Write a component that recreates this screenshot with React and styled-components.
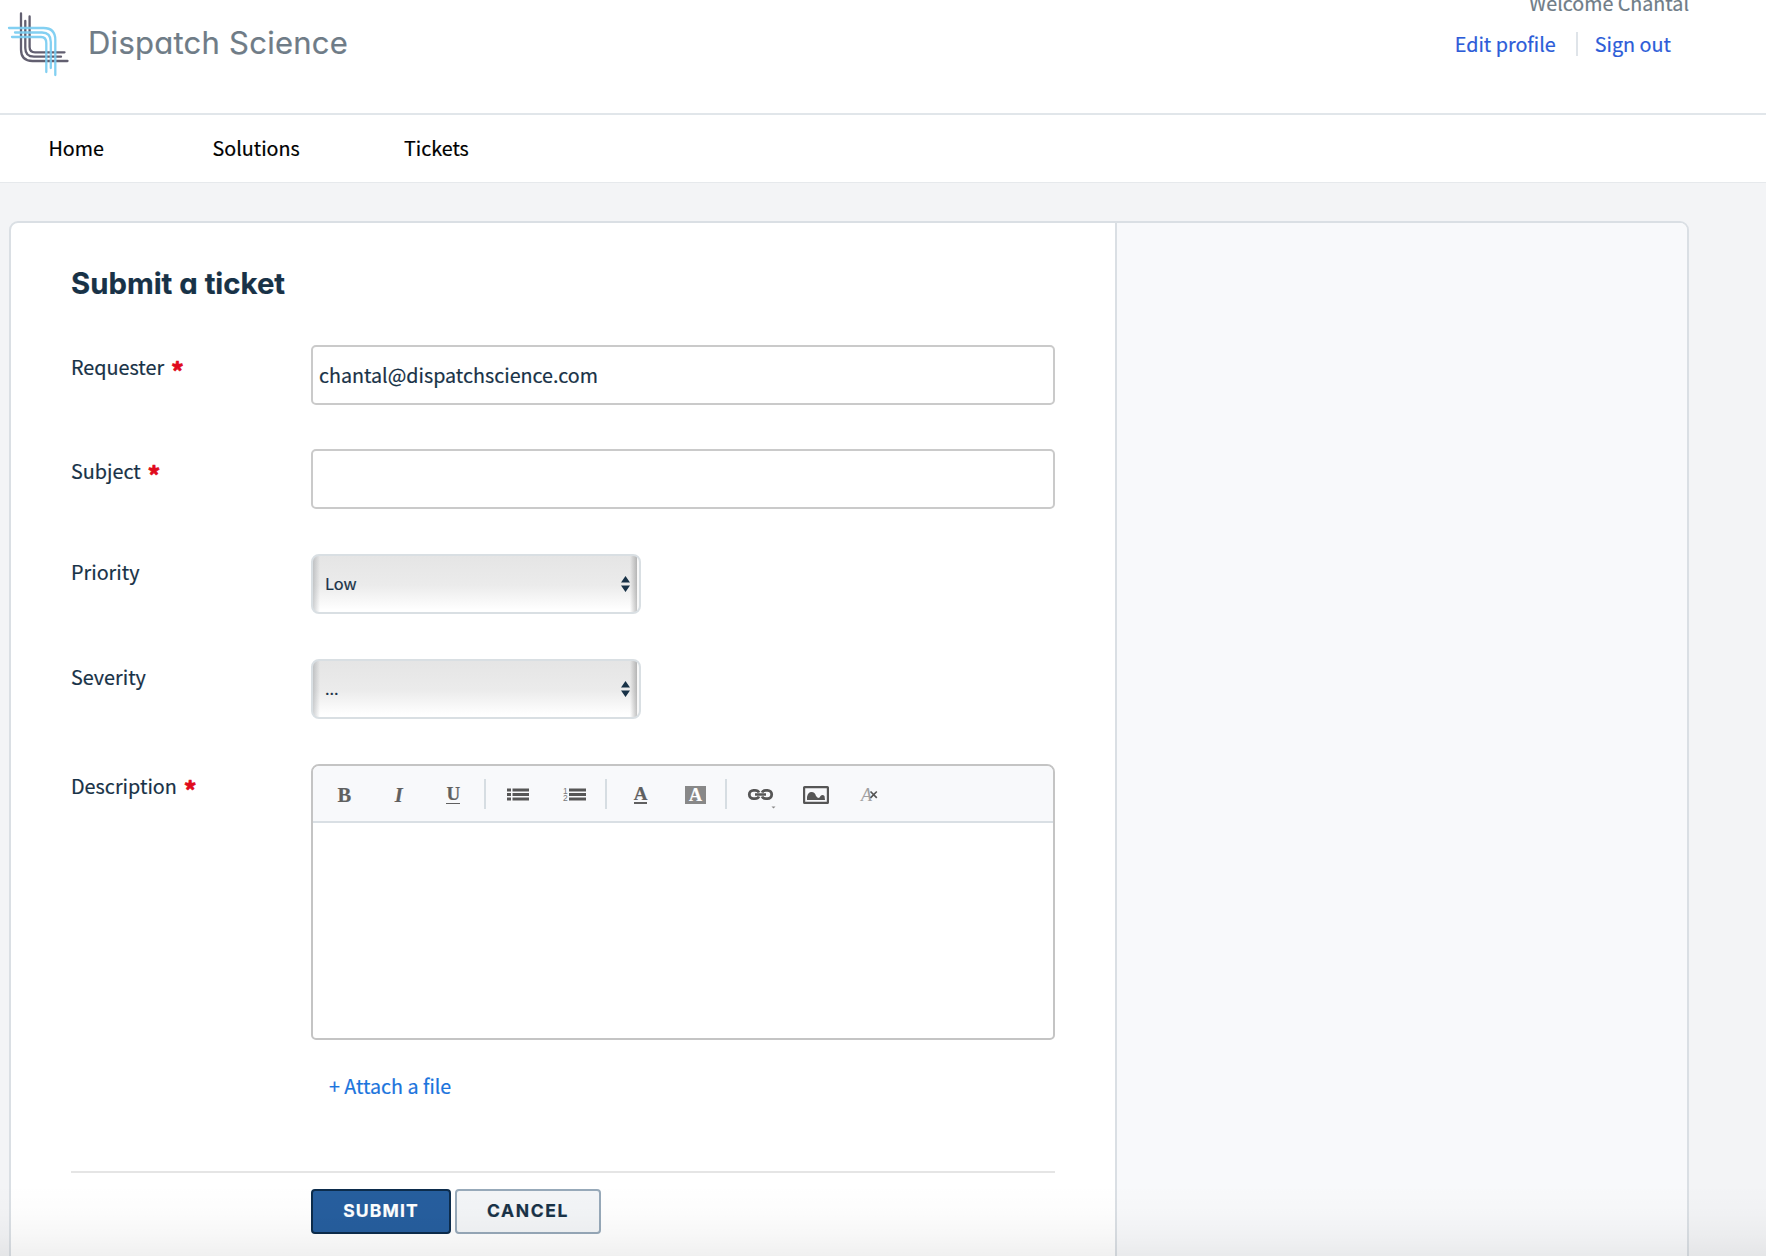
import React from "react";
import styled, { createGlobalStyle, css } from "styled-components";

const sans = '"Noto Sans CJK SC", "Noto Sans", sans-serif';
const display = 'Inter, "Open Sans", sans-serif';

const GlobalStyle = createGlobalStyle`
  *, *::before, *::after { box-sizing: border-box; }
  html, body { margin: 0; padding: 0; }
  body {
    background: #f3f4f6;
    color: #183247;
    font-family: ${sans};
    font-size: 20px;
    -webkit-text-stroke: 0.2px;
    overflow: hidden;
  }
`;

const Page = styled.div`
  position: relative;
  display: flex;
  flex-direction: column;
  height: 1256px;
  overflow: hidden;
`;

const Header = styled.header`
  display: flex;
  flex: none;
  justify-content: space-between;
  align-items: flex-start;
  height: 115px;
  padding-right: 77px;
  background: #fff;
  border-bottom: 2px solid #e1e6ea;
`;

const Brand = styled.div`
  display: flex;
  align-items: center;
  height: 86px;
`;

const BrandMark = styled.svg`
  width: 88px;
  height: 86px;
  fill: none;
  stroke-width: 2.3;
  stroke-linecap: round;
`;

const BrandName = styled.span`
  font-family: ${display};
  font-size: 31px;
  line-height: 40px;
  letter-spacing: 0.25px;
  font-feature-settings: "cv11";
  color: #6f7c87;
`;

const Account = styled.div`
  display: flex;
  flex-direction: column;
  align-items: flex-end;
  margin-top: -9px;
`;

const Welcome = styled.span`
  font-size: 19.7px;
  line-height: 24px;
  color: #6f7c87;
`;

const AccountLinks = styled.div`
  display: flex;
  align-items: center;
  margin: 17px 18px 0 0;
`;

const AccountLink = styled.a`
  font-size: 19.75px;
  line-height: 24px;
  color: #2c5cd8;
  & + & {
    margin-left: 20px;
    padding-left: 17px;
    border-left: 2px solid #dfe4e9;
  }
`;

const Nav = styled.nav`
  display: flex;
  flex: none;
  align-items: center;
  height: 68px;
  padding: 0 0 2px 48.5px;
  background: #fff;
  border-bottom: 1px solid #e6e9ec;
`;

const NavLink = styled.a`
  width: ${(p) => p.$width}px;
  font-size: 19.7px;
  line-height: 30px;
  color: #000;
`;

const Card = styled.main`
  display: flex;
  flex: none;
  width: 1680px;
  height: 1080px;
  margin: 38px 0 0 9px;
  background: #fff;
  border: 2px solid #dadfe4;
  border-radius: 9px;
  overflow: hidden;
`;

const Form = styled.form`
  width: 1104px;
  padding: 44px 60px 0;
`;

const Sidebar = styled.aside`
  flex: 1;
  background: #f8f9fb;
  border-left: 2px solid #dadfe4;
`;

const Title = styled.h1`
  margin: 0 0 44px;
  font-family: ${display};
  font-size: 29.3px;
  font-weight: 650;
  line-height: 34px;
  letter-spacing: 0;
  font-feature-settings: "cv11";
`;

const Row = styled.div`
  display: grid;
  grid-template-columns: 240px 744px;
  align-items: start;
  margin-bottom: ${(p) => p.$gap ?? 45}px;
`;

const Label = styled.label`
  display: flex;
  padding-top: ${(p) => (p.$raised ? 3 : 7)}px;
  font-size: 19.8px;
  line-height: 30px;
`;

const Required = styled.span`
  height: 30px;
  margin-left: 7px;
  padding-top: 3px;
  font-size: 23.5px;
  font-weight: 900;
  line-height: 30px;
  color: #e00b1c;
  -webkit-text-stroke: 0.6px;
`;

const TextInput = styled.input`
  width: 100%;
  height: 60px;
  padding: 0 6px 1px;
  font-family: ${sans};
  font-size: 19.7px;
  color: #183247;
  background: #fff;
  border: 2px solid #cacaca;
  border-radius: 5px;
  outline: none;
`;

const SelectBox = styled.div`
  display: flex;
  justify-content: space-between;
  align-items: center;
  width: 330px;
  height: 60px;
  padding: 0 9.5px 0 12px;
  background: linear-gradient(
      90deg,
      rgba(120, 125, 130, 0.35),
      transparent 7px,
      transparent calc(100% - 9px),
      rgba(110, 110, 110, 0.42) calc(100% - 2px),
      #f8f8f8 calc(100% - 2px)
    ),
    linear-gradient(#e5e5e5 0%, #ebebeb 52%, #fff 96%);
  border: 2px solid #d9dfe3;
  border-radius: 8px;
`;

const SelectValue = styled.span`
  padding-bottom: 2px;
  font-size: 16.3px;
  line-height: 24px;
`;

const Arrows = styled.svg`
  width: 9px;
  height: 16px;
  fill: #183247;
`;

const Editor = styled.div`
  height: 276px;
  background: #fff;
  border: 2px solid #c4c4c4;
  border-radius: 8px 8px 5px 5px;
  overflow: hidden;
`;

const Toolbar = styled.div`
  display: flex;
  align-items: center;
  height: 57px;
  padding-left: 4px;
  background: #f8f9fb;
  border-bottom: 2px solid #d9dfe4;
`;

const Tool = styled.span`
  display: flex;
  flex: none;
  justify-content: center;
  align-items: center;
  width: ${(p) => p.$width ?? 54.5}px;
  height: 54px;
  padding-top: 2px;
`;

const Separator = styled.span`
  flex: none;
  width: 2px;
  height: 30px;
  margin: 0 ${(p) => p.$after}px 0 ${(p) => p.$before}px;
  background: #d6dde2;
`;

const Letter = styled.span`
  display: block;
  font-family: "Liberation Serif", serif;
  font-size: 20.5px;
  font-weight: 700;
  line-height: 22px;
  color: #606060;
  ${(p) => p.$italic && css`font-style: italic;`}
  ${(p) =>
    p.$underline &&
    css`
      height: 19px;
      font-size: 19px;
      line-height: 17px;
      border-bottom: ${p.$underline}px solid #606060;
    `}
  ${(p) =>
    p.$boxed &&
    css`
      width: 21px;
      height: 18px;
      line-height: 19px;
      font-size: 18px;
      text-align: center;
      color: #fff;
      background: #888;
    `}
`;

const Icon = styled.svg`
  flex: none;
  overflow: visible;
  width: ${(p) => p.$w}px;
  height: ${(p) => p.$h}px;
  fill: none;
  stroke: #565656;
`;

const IconLabel = styled.text`
  fill: #777;
  stroke: none;
  font: 8.5px "Liberation Sans", sans-serif;
`;

const ClearLetter = styled.text`
  fill: #a0a0a0;
  stroke: none;
  font: italic 18px "Liberation Serif", serif;
`;

const Attach = styled.a`
  display: block;
  margin: 31px 0 0 258px;
  font-size: 19.7px;
  line-height: 30px;
  color: #1b74dd;
`;

const Actions = styled.div`
  display: flex;
  gap: 4px;
  margin-top: 70px;
  padding: 16px 0 0 240px;
  border-top: 2px solid #e5e5e5;
`;

const Button = styled.button`
  width: ${(p) => (p.$primary ? 140 : 146)}px;
  height: 45px;
  padding: 0 0 2px;
  font-family: ${display};
  font-size: 17.5px;
  font-weight: 700;
  letter-spacing: ${(p) => (p.$primary ? 1.15 : 1.6)}px;
  color: ${(p) => (p.$primary ? "#fff" : "#183247")};
  background: ${(p) => (p.$primary ? "#265e9e" : "#f3f5f7")};
  border: 2px solid ${(p) => (p.$primary ? "#0c2c4c" : "#97a9b9")};
  border-radius: 4px;
`;

const BottomShade = styled.div`
  position: absolute;
  inset: auto 0 0;
  height: 72px;
  pointer-events: none;
  background: linear-gradient(
    transparent,
    rgba(0, 0, 0, 0.012) 40%,
    rgba(0, 0, 0, 0.03) 72%,
    rgba(0, 0, 0, 0.058)
  );
`;

function Logo() {
  return (
    <BrandMark viewBox="0 0 88 86">
      <g stroke="#625f70">
        <path d="M21 13.5V49.500Q21 61 32.500 61H67.500" />
        <path d="M25.300 21V48Q25.300 56.700 34 56.700H61" />
        <path d="M29.600 16.500V47Q29.600 52.300 35 52.300H64.500" />
      </g>
      <g stroke="#79cdf1" opacity="0.92">
        <path d="M9 28H43.500Q55.300 28 55.300 40V75" />
        <path d="M15 32.500H42Q50.800 32.500 50.800 42V68" />
        <path d="M12 37H41Q46.300 37 46.300 43V72" />
      </g>
    </BrandMark>
  );
}

function Select({ value }) {
  return (
    <SelectBox>
      <SelectValue>{value}</SelectValue>
      <Arrows viewBox="0 0 9 16">
        <path d="M4.500 0L9 6.500H0zM0 9.500H9L4.500 16z" />
      </Arrows>
    </SelectBox>
  );
}

function Field({ label, required, raised, gap, children }) {
  return (
    <Row $gap={gap}>
      <Label $raised={raised}>
        {label}
        {required && <Required>*</Required>}
      </Label>
      {children}
    </Row>
  );
}

function EditorToolbar() {
  return (
    <Toolbar>
      <Tool><Letter>B</Letter></Tool>
      <Tool><Letter $italic>I</Letter></Tool>
      <Tool><Letter $underline={1.5}>U</Letter></Tool>
      <Separator $before={3.5} $after={4} />
      <Tool $width={56}>
        <Icon $w={22} $h={13} viewBox="0 0 22 13">
          <path d="M0 2H4M0 6.500H4M0 11H4M5.500 2H22M5.500 6.500H22M5.500 11H22" strokeWidth="3" />
        </Icon>
      </Tool>
      <Tool $width={56}>
        <Icon $w={23} $h={13} viewBox="0 0 23 13">
          <IconLabel x="0" y="5.500">1</IconLabel>
          <IconLabel x="0" y="12.500">2</IconLabel>
          <path d="M6 2H23M6 6.500H23M6 11H23" strokeWidth="3" />
        </Icon>
      </Tool>
      <Separator $before={3} $after={6} />
      <Tool $width={55}><Letter $underline={2}>A</Letter></Tool>
      <Tool $width={55}><Letter $boxed>A</Letter></Tool>
      <Separator $before={2} $after={5} />
      <Tool $width={56}>
        <Icon $w={25} $h={11} viewBox="0 0 25 11">
          <path d="M11 3.500Q10 1.300 7 1.300H5.500A4.200 4.200 0 0 0 5.500 9.700H7Q10 9.700 11 7.500M14 3.500Q15 1.300 18 1.300H19.500A4.200 4.200 0 0 1 19.500 9.700H18Q15 9.700 14 7.500" strokeWidth="2.800" />
          <path d="M7 5.500H18" strokeWidth="2.400" />
          <path d="M23.500 17.500H27.500L25.500 19.500z" fill="#888" stroke="none" />
        </Icon>
      </Tool>
      <Tool $width={56}>
        <Icon $w={26} $h={18} viewBox="0 0 26 18">
          <rect x="1.100" y="1.100" width="23.800" height="15.800" strokeWidth="2.200" rx=".5" />
          <path d="M4 14V11Q5 6 8.500 6Q12 6 13 10L15 12Q17 12 17.500 10Q19.500 8 21.500 10L22 14z" fill="#565656" stroke="none" />
        </Icon>
      </Tool>
      <Tool $width={49}>
        <Icon $w={18} $h={13} viewBox="0 0 18 13">
          <ClearLetter x="1" y="12.500">A</ClearLetter>
          <path d="M10.500 3.500L16.800 9.800M16.800 3.500L10.500 9.800" strokeWidth="1.700" />
        </Icon>
      </Tool>
    </Toolbar>
  );
}

export default function App() {
  return (
    <>
      <GlobalStyle />
      <Page>
        <Header>
          <Brand>
            <Logo />
            <BrandName>Dispatch Science</BrandName>
          </Brand>
          <Account>
            <Welcome>Welcome Chantal</Welcome>
            <AccountLinks>
              <AccountLink>Edit profile</AccountLink>
              <AccountLink>Sign out</AccountLink>
            </AccountLinks>
          </Account>
        </Header>
        <Nav>
          <NavLink $width={164}>Home</NavLink>
          <NavLink $width={191.5}>Solutions</NavLink>
          <NavLink $width={100}>Tickets</NavLink>
        </Nav>
        <Card>
          <Form>
            <Title>Submit a ticket</Title>
            <Field label="Requester" required gap={44}>
              <TextInput defaultValue="chantal@dispatchscience.com" />
            </Field>
            <Field label="Subject" required>
              <TextInput />
            </Field>
            <Field label="Priority" raised>
              <Select value="Low" />
            </Field>
            <Field label="Severity" raised>
              <Select value="..." />
            </Field>
            <Field label="Description" required gap={0}>
              <Editor>
                <EditorToolbar />
              </Editor>
            </Field>
            <Attach>+ Attach a file</Attach>
            <Actions>
              <Button type="button" $primary>SUBMIT</Button>
              <Button type="button">CANCEL</Button>
            </Actions>
          </Form>
          <Sidebar />
        </Card>
        <BottomShade />
      </Page>
    </>
  );
}
